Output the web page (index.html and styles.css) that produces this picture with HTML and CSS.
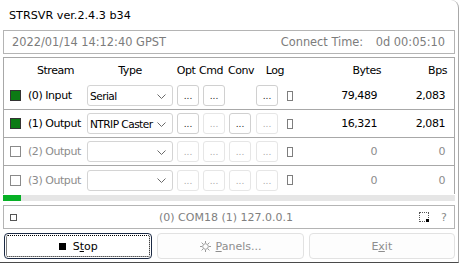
FILE: index.html
```html
<!DOCTYPE html>
<html>
<head>
<meta charset="utf-8">
<link rel="stylesheet" href="styles.css">
</head>
<body>
<div class="win">
  <div class="title">STRSVR ver.2.4.3 b34</div>
  <div class="timebox">
    <span class="date">2022/01/14 14:12:40 GPST</span>
    <span class="ct">Connect Time:</span>
    <span class="ctv">0d 00:05:10</span>
  </div>
  <div class="table">
    <div class="row head">
      <span class="h-stream">Stream</span>
      <span class="h-type">Type</span>
      <span class="h-opt">Opt</span>
      <span class="h-cmd">Cmd</span>
      <span class="h-conv">Conv</span>
      <span class="h-log">Log</span>
      <span class="h-bytes">Bytes</span>
      <span class="h-bps">Bps</span>
    </div>
    <div class="row line">
      <span class="cbcell"><span class="cb on"></span></span>
      <span class="label">(0) Input</span>
      <span class="combo"><span class="ctext">Serial</span><svg class="chev" width="9" height="5" viewBox="0 0 9 5"><polyline points="0.5,0.5 4.5,4.5 8.5,0.5" fill="none" stroke="#6a6a6a" stroke-width="1"/></svg></span>
      <span class="btn">...</span>
      <span class="btn">...</span>
      <span class="btn none"></span>
      <span class="btn log">...</span>
      <span class="ind"></span>
      <span class="bytes">79,489</span>
      <span class="bps">2,083</span>
    </div>
    <div class="row line">
      <span class="cbcell"><span class="cb on"></span></span>
      <span class="label">(1) Output</span>
      <span class="combo"><span class="ctext">NTRIP Caster</span><svg class="chev" width="9" height="5" viewBox="0 0 9 5"><polyline points="0.5,0.5 4.5,4.5 8.5,0.5" fill="none" stroke="#6a6a6a" stroke-width="1"/></svg></span>
      <span class="btn">...</span>
      <span class="btn dis">...</span>
      <span class="btn">...</span>
      <span class="btn log dis">...</span>
      <span class="ind"></span>
      <span class="bytes">16,321</span>
      <span class="bps">2,081</span>
    </div>
    <div class="row line off">
      <span class="cbcell"><span class="cb"></span></span>
      <span class="label">(2) Output</span>
      <span class="combo"><span class="ctext"></span><svg class="chev" width="9" height="5" viewBox="0 0 9 5"><polyline points="0.5,0.5 4.5,4.5 8.5,0.5" fill="none" stroke="#6a6a6a" stroke-width="1"/></svg></span>
      <span class="btn dis">...</span>
      <span class="btn dis">...</span>
      <span class="btn dis">...</span>
      <span class="btn log dis">...</span>
      <span class="ind"></span>
      <span class="bytes">0</span>
      <span class="bps">0</span>
    </div>
    <div class="row off">
      <span class="cbcell"><span class="cb"></span></span>
      <span class="label">(3) Output</span>
      <span class="combo"><span class="ctext"></span><svg class="chev" width="9" height="5" viewBox="0 0 9 5"><polyline points="0.5,0.5 4.5,4.5 8.5,0.5" fill="none" stroke="#6a6a6a" stroke-width="1"/></svg></span>
      <span class="btn dis">...</span>
      <span class="btn dis">...</span>
      <span class="btn dis">...</span>
      <span class="btn log dis">...</span>
      <span class="ind"></span>
      <span class="bytes">0</span>
      <span class="bps">0</span>
    </div>
  </div>
  <div class="prog"><div class="fill" style="width:18px"></div></div>
  <div class="status">
    <span class="scb"></span>
    <span class="stext">(0) COM18 (1) 127.0.0.1</span>
    <span class="sicon"><span class="sdot"></span></span>
    <span class="q">?</span>
  </div>
  <div class="buttons">
    <div class="pbtn focus"><div class="focusrect"><span class="stopsq"></span><span>S<u>t</u>op</span></div></div>
    <div class="pbtn gray">
      <svg class="gear" width="11" height="11" viewBox="0 0 11 11"><circle cx="5.5" cy="5.5" r="2.8" fill="none" stroke="#9a9a9a" stroke-width="1"/><g stroke="#9a9a9a" stroke-width="1"><line x1="5.5" y1="0" x2="5.5" y2="2"/><line x1="5.5" y1="9" x2="5.5" y2="11"/><line x1="0" y1="5.5" x2="2" y2="5.5"/><line x1="9" y1="5.5" x2="11" y2="5.5"/><line x1="1.6" y1="1.6" x2="3" y2="3"/><line x1="8" y1="8" x2="9.4" y2="9.4"/><line x1="1.6" y1="9.4" x2="3" y2="8"/><line x1="8" y1="3" x2="9.4" y2="1.6"/></g></svg>
      <span><u>P</u>anels...</span>
    </div>
    <div class="pbtn gray"><span>E<u>x</u>it</span></div>
  </div>
</div>
</body>
</html>
```
FILE: styles.css
```css
* { box-sizing: border-box; }
html, body { margin: 0; padding: 0; background: #ffffff; }
body {
  width: 460px; height: 264px; overflow: hidden;
  font-family: "DejaVu Sans", "Liberation Sans", sans-serif;
  font-size: 11px; color: #000;
}
.win {
  width: 459px; height: 263px;
  background: #fff;
  border-right: 1px solid #a8a8a8;
  border-bottom: 1px solid #4a4a4a;
  border-top-right-radius: 8px;
  display: flex; flex-direction: column;
}
.title {
  height: 30px; padding-left: 9px; padding-top: 1px;
  display: flex; align-items: center;
  font-size: 11.2px; color: #000;
}
.timebox {
  margin: 0 3px; height: 24px;
  border: 1px solid #b4b4b4;
  display: flex; align-items: center;
  padding: 0 9px 0 8px;
  color: #7c7c7c; font-size: 11.4px;
}
.date { flex: 1; }
.ct { width: 95px; }
.table {
  margin: 3px 3px 0; height: 137px;
  border: 1px solid #a8a8a8; border-bottom: none;
  display: flex; flex-direction: column;
  letter-spacing: -0.45px;
}
.row { display: flex; align-items: center; height: 28px; padding-right: 9px; }
.row.line { border-bottom: 1px solid #a8a8a8; }
.row.head { height: 24px; padding-right: 7px; }
.head span { text-align: center; }
.h-stream { margin-left: 20px; width: 63px; }
.h-type { width: 86px; }
.h-opt { width: 26px; }
.h-cmd { width: 22px; }
.h-conv { width: 40px; }
.h-log { width: 28px; }
.head .h-bytes { flex: 1; text-align: right; }
.head .h-bps { width: 66px; text-align: right; }
.cbcell { width: 20px; padding-left: 6px; display: flex; }
.cb {
  width: 11px; height: 11px;
  border: 1px solid #8a8a8a; background: #fff;
}
.cb.on { border-color: #333; background: #0c7a14; box-shadow: inset 0 0 0 1px #0c7a14; }
.label { width: 63px; padding-left: 4px; white-space: nowrap; }
.off .label, .off .bytes, .off .bps { color: #8c8c8c; }
.combo {
  width: 86px; height: 21px;
  border: 1px solid #d4d4d4; border-radius: 3px;
  display: flex; align-items: center; padding: 0 6px 0 2px;
  background: #fff;
}
.ctext { flex: 1; white-space: nowrap; font-size: 10.6px; letter-spacing: -0.55px; }
.chev { display: block; margin-top: 1px; }
.btn {
  width: 22px; height: 21px; margin-left: 4px;
  border: 1px solid #d0d0d0; border-radius: 3px;
  display: flex; align-items: flex-end; justify-content: center;
  font-size: 9px; color: #222; padding-bottom: 4px; letter-spacing: 0px;
  background: #fff;
}
.btn.log { margin-left: 5px; }
.btn.dis { border-color: #e6e6e6; color: #a8a8a8; }
.btn.none { border: none; background: transparent; }
.ind {
  width: 6px; height: 10px; margin-left: 9px;
  border: 1px solid #7e7e7e; background: #fff;
}
.bytes { flex: 1; text-align: right; }
.bps { width: 68px; text-align: right; }
.prog {
  margin: 1px 3px 0; height: 6px; background: #e6e6e6;
}
.prog .fill { height: 6px; background: #06b025; }
.status {
  margin: 4px 3px 0; height: 24px;
  border: 1px solid #b4b4b4;
  display: flex; align-items: center;
  padding: 0 5px 0 6px;
  color: #808080;
}
.scb { width: 7px; height: 7px; border: 1px solid #555; margin-top: 1px; }
.stext { flex: 1; text-align: center; margin-left: 16px; }
.sicon {
  width: 10px; height: 10px; border: 1px dotted #555;
  display: flex; align-items: flex-end; justify-content: flex-end;
}
.sdot { width: 3px; height: 3px; background: #000; margin: 0 -1px -1px 0; }
.q { margin-left: 12px; width: 8px; color: #8a8a8a; }
.buttons {
  margin: 4px 3px 0 4px; height: 26px;
  display: flex; gap: 5px;
}
.pbtn {
  flex: 1; border: 1px solid #e2e2e2; border-radius: 4px;
  background: #fdfdfd;
  display: flex; align-items: center; justify-content: center; gap: 5px;
}
.pbtn.gray { color: #8e8e8e; }
.pbtn.focus { border: 1px solid #1c2a44; background: #fff; padding: 1px; }
.focusrect {
  flex: 1; align-self: stretch;
  border: 1px dotted #000; border-radius: 2px;
  display: flex; align-items: center; justify-content: center; gap: 7px;
}
.stopsq { width: 7px; height: 7px; background: #000; }
.gear { display: block; }
```
